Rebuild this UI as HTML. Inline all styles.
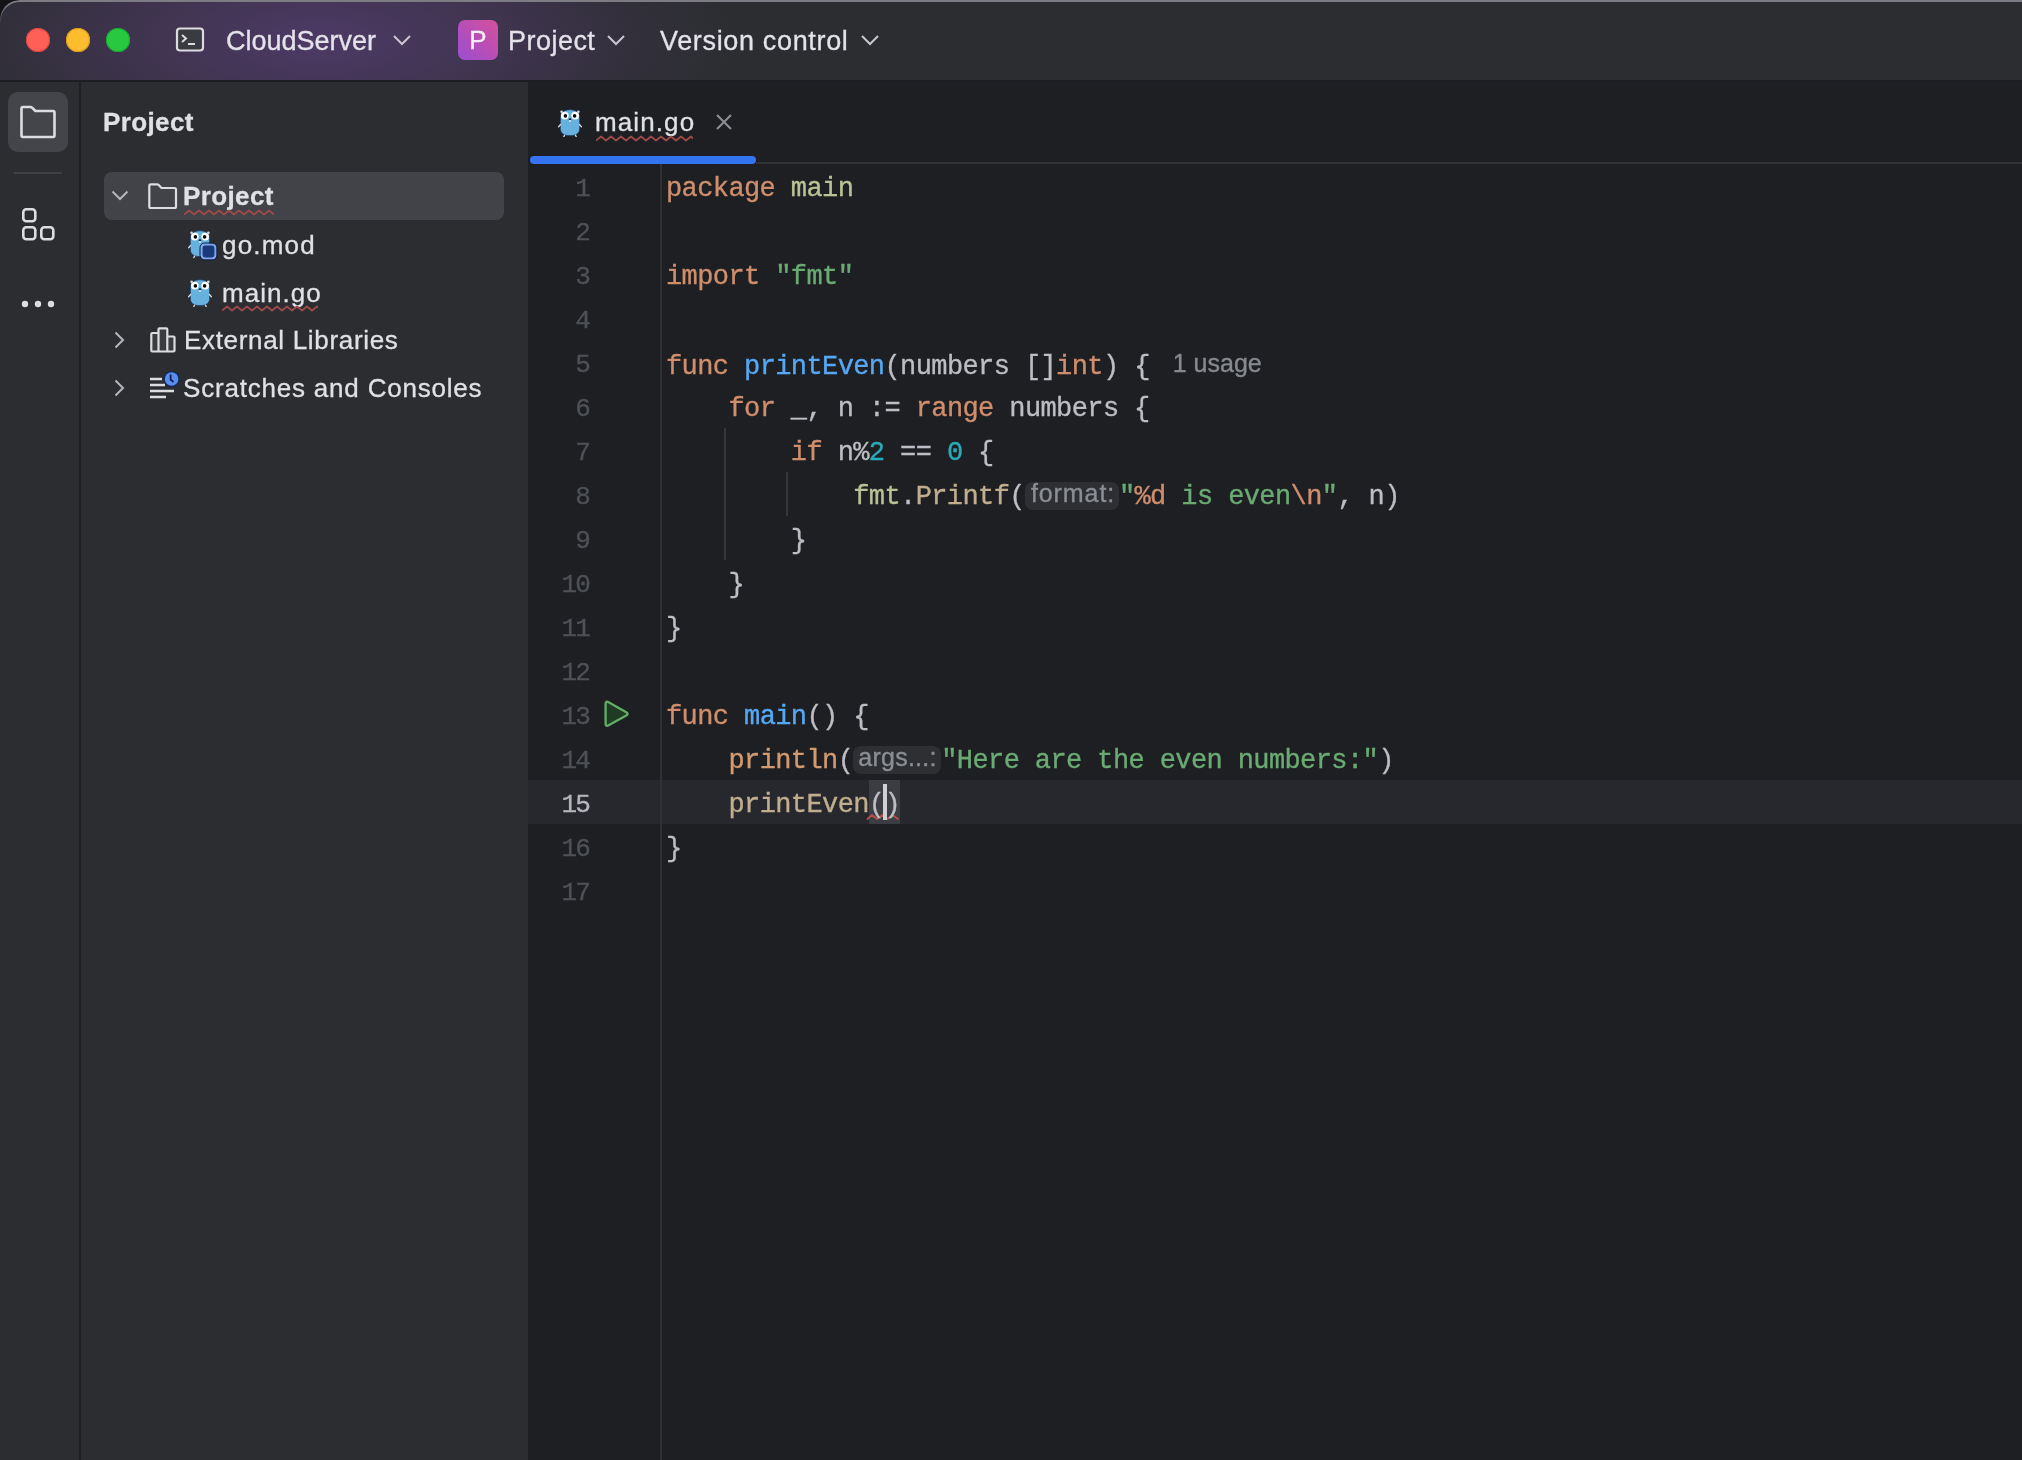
<!DOCTYPE html>
<html><head><meta charset="utf-8">
<style>
*{margin:0;padding:0;box-sizing:border-box}
html,body{width:2022px;height:1460px;overflow:hidden;background:#141416}
body{position:relative;font-family:"Liberation Sans",sans-serif;color:#DFE1E5;-webkit-text-stroke:0.3px currentColor}
.abs{position:absolute}
#title{left:0;top:0;width:2022px;height:80px;background:#2B2D30;overflow:hidden;border-top-left-radius:20px}
#glow{left:0;top:0;width:2022px;height:80px;background:radial-gradient(ellipse 420px 160px at 320px 40px,rgba(125,75,175,0.42),rgba(125,75,175,0.26) 40%,rgba(125,75,175,0.09) 75%,rgba(125,75,175,0) 100%)}
#topline{left:0;top:0;width:2022px;height:24px;border-top:2px solid #7D7C84;border-left:1.5px solid #66676C;border-top-left-radius:20px;-webkit-mask-image:linear-gradient(to bottom,#000 0,#000 12px,transparent 24px)}
#titlesep{left:0;top:80px;width:2022px;height:2px;background:#1C1C23}
#strip{left:0;top:82px;width:79px;height:1378px;background:#2B2D30}
#stripsep{left:79px;top:82px;width:2px;height:1378px;background:#1E1F22}
#panel{left:81px;top:82px;width:447px;height:1378px;background:#2B2D30}
#editor{left:528px;top:82px;width:1494px;height:1378px;background:#1E1F22}
#tabline{left:756px;top:162px;width:1266px;height:2px;background:#313236}
#tabul{left:530px;top:156px;width:226px;height:8px;background:#3574F0;border-radius:4px}
#gutline{left:660px;top:164px;width:2px;height:1296px;background:#2F3135}
.tt{font-size:27px;color:#E4E2EA;white-space:nowrap}
.code{font-family:"Liberation Mono",monospace;font-size:27px;letter-spacing:-0.6px;-webkit-text-stroke:0.35px currentColor;white-space:pre;line-height:44px;height:44px}
.ln{font-family:"Liberation Mono",monospace;font-size:26px;letter-spacing:-1.8px;line-height:44px;height:44px;color:#4E5157;text-align:right;width:60px;left:527px}
.k{color:#CF8E6D}.f{color:#56A8F5}.n{color:#2AACB8}.st{color:#6AAB73}.pk{color:#B9C296}.fc{color:#C0AE8E}.bi{color:#D49A6E}
.hint{display:inline-block;font-family:"Liberation Sans",sans-serif;font-size:25px;color:#8B8E94;background:#2D2F33;border-radius:8px;height:28px;line-height:23px;vertical-align:top;margin-top:7px;box-sizing:border-box;white-space:nowrap;overflow:hidden}
.cl{position:absolute;left:666px;width:1300px;color:#BCBEC4}
</style></head>
<body><div id="wrap" style="position:absolute;left:0;top:0;width:2022px;height:1460px;will-change:transform">
<div id="title" class="abs">
  <div id="glow" class="abs"></div>
  <div class="abs" style="left:26px;top:28px;width:24px;height:24px;border-radius:50%;background:#FF5F57;box-shadow:inset 0 0 0 1px #D6453E"></div>
  <div class="abs" style="left:66px;top:28px;width:24px;height:24px;border-radius:50%;background:#FEBC2E;box-shadow:inset 0 0 0 1px #D69B1F"></div>
  <div class="abs" style="left:106px;top:28px;width:24px;height:24px;border-radius:50%;background:#28C840;box-shadow:inset 0 0 0 1px #1DA631"></div>
  <svg class="abs" style="left:174px;top:26px" width="32" height="28" viewBox="0 0 32 28">
    <rect x="3" y="2.5" width="26" height="22" rx="3" fill="#3A3B40" stroke="#DCDCE0" stroke-width="2.2"/>
    <path d="M8 9 L12 12.5 L8 16" fill="none" stroke="#DCDCE0" stroke-width="2"/>
    <path d="M14 18 H21" stroke="#DCDCE0" stroke-width="2.2"/>
  </svg>
  <div class="abs tt" style="left:226px;top:25px;line-height:32px">CloudServer</div>
  <svg class="abs" style="left:392px;top:34px" width="20" height="12" viewBox="0 0 20 12"><path d="M2 2 L10 10 L18 2" fill="none" stroke="#C9C6D2" stroke-width="2"/></svg>
  <div class="abs" style="left:458px;top:20px;width:40px;height:40px;border-radius:7px;background:linear-gradient(45deg,#9B4DD3,#D5509A)"></div>
  <div class="abs" style="left:458px;top:20px;width:40px;height:40px;line-height:40px;text-align:center;font-size:26px;color:#F4EEF6">P</div>
  <div class="abs tt" style="left:508px;top:25px;line-height:32px;letter-spacing:0.47px">Project</div>
  <svg class="abs" style="left:606px;top:34px" width="20" height="12" viewBox="0 0 20 12"><path d="M2 2 L10 10 L18 2" fill="none" stroke="#C9C6D2" stroke-width="2"/></svg>
  <div class="abs tt" style="left:660px;top:25px;line-height:32px;letter-spacing:0.66px">Version control</div>
  <svg class="abs" style="left:860px;top:34px" width="20" height="12" viewBox="0 0 20 12"><path d="M2 2 L10 10 L18 2" fill="none" stroke="#C9C6D2" stroke-width="2"/></svg>
</div>
<div id="topline" class="abs"></div>
<div id="titlesep" class="abs"></div>
<div id="strip" class="abs"></div>
<div class="abs" style="left:8px;top:92px;width:60px;height:60px;border-radius:10px;background:#43454A"></div>
<svg class="abs" style="left:18px;top:104px" width="40" height="36" viewBox="0 0 40 36">
  <path d="M3.5 4.5 Q3.5 3 5 3 L12.5 3 Q13.5 3 14.3 3.8 L17.5 7 L35 7 Q36.5 7 36.5 8.5 L36.5 31.5 Q36.5 33 35 33 L5 33 Q3.5 33 3.5 31.5 Z" fill="none" stroke="#DCDDE1" stroke-width="2.6" stroke-linejoin="round"/>
</svg>
<div class="abs" style="left:14px;top:172px;width:48px;height:2px;background:#3F4145"></div>
<svg class="abs" style="left:18px;top:204px" width="40" height="40" viewBox="0 0 40 40">
  <rect x="5.3" y="5.3" width="12" height="12" rx="3" fill="none" stroke="#DCDDE1" stroke-width="2.6"/>
  <rect x="5.3" y="23.3" width="12" height="12" rx="3" fill="none" stroke="#DCDDE1" stroke-width="2.6"/>
  <rect x="23.3" y="23.3" width="12" height="12" rx="3" fill="none" stroke="#DCDDE1" stroke-width="2.6"/>
</svg>
<svg class="abs" style="left:18px;top:294px" width="40" height="20" viewBox="0 0 40 20">
  <circle cx="7" cy="10" r="3.2" fill="#DCDDE1"/><circle cx="20" cy="10" r="3.2" fill="#DCDDE1"/><circle cx="33" cy="10" r="3.2" fill="#DCDDE1"/>
</svg>
<div id="stripsep" class="abs"></div>
<div id="panel" class="abs"></div>
<div class="abs" style="left:103px;top:104px;font-size:26px;font-weight:bold;line-height:36px;color:#DFE1E5;letter-spacing:0.38px">Project</div>
<div class="abs" style="left:104px;top:172px;width:400px;height:48px;border-radius:8px;background:#414348"></div>
<svg class="abs" style="left:110px;top:188px" width="20" height="14" viewBox="0 0 20 14"><path d="M2.5 3.5 L10 11 L17.5 3.5" fill="none" stroke="#B4B6BB" stroke-width="2"/></svg>
<svg class="abs" style="left:146px;top:181px" width="32" height="30" viewBox="0 0 32 30">
  <path d="M3.3 4.8 Q3.3 3.3 4.8 3.3 L11 3.3 Q12 3.3 12.7 4 L15.5 7 L28.5 7 Q30 7 30 8.5 L30 25.5 Q30 27 28.5 27 L4.8 27 Q3.3 27 3.3 25.5 Z" fill="none" stroke="#DCDDE1" stroke-width="2.2" stroke-linejoin="round"/>
</svg>
<div class="abs" style="left:183px;top:178px;font-size:26px;font-weight:bold;line-height:36px;color:#DFE1E5;letter-spacing:0.38px">Project</div>
<svg class="abs" style="left:184px;top:209px" width="90" height="7" viewBox="0 0 90 7"><path d="M0 5.5 L5.0 1.5 L10.0 5.5 L15.0 1.5 L20.0 5.5 L25.0 1.5 L30.0 5.5 L35.0 1.5 L40.0 5.5 L45.0 1.5 L50.0 5.5 L55.0 1.5 L60.0 5.5 L65.0 1.5 L70.0 5.5 L75.0 1.5 L80.0 5.5 L85.0 1.5 L90.0 5.5 L95.0 1.5" fill="none" stroke="#A04A4A" stroke-width="1.7" stroke-linejoin="round"/></svg>
<svg class="abs" style="left:188px;top:230px" width="32" height="32" viewBox="-1 0 32 32"><circle cx="2.6" cy="2.8" r="1.3" fill="#D5DEE6"/><circle cx="19.4" cy="2.8" r="1.3" fill="#D5DEE6"/>
<path d="M11 0.8 C18 0.8 20.6 4.5 20.6 11 L20.6 19.5 C20.6 24.6 16.6 26.6 11 26.6 C5.4 26.6 1.4 24.6 1.4 19.5 L1.4 11 C1.4 4.5 4 0.8 11 0.8 Z" fill="#67B1DF" stroke="#1C3D66" stroke-width="0.7"/>
<path d="M1.6 15.5 L-0.4 17.8 M20.4 15.5 L22.4 17.8 M5.5 26.2 L4.8 27.6 M16.5 26.2 L17.2 27.6" stroke="#D5DEE6" stroke-width="1.3" stroke-linecap="round"/>
<circle cx="5.8" cy="6.6" r="3.9" fill="#FFFFFF"/><circle cx="16.2" cy="6.6" r="3.9" fill="#FFFFFF"/>
<circle cx="6.4" cy="6.9" r="1.8" fill="#0A0A0A"/><circle cx="15.6" cy="6.9" r="1.8" fill="#0A0A0A"/>
<ellipse cx="11" cy="10.3" rx="1.3" ry="1" fill="#14202C"/><path d="M10.1 11.2 h1.8 v1.6 h-1.8 z" fill="#F0F0F0"/>
  <rect x="12.5" y="14.5" width="14" height="14" rx="3.5" fill="#1A3A7A" stroke="#7FA6F0" stroke-width="2.2"/>
  <rect x="11" y="13" width="17" height="17" rx="4.5" fill="none" stroke="#0F2140" stroke-width="1"/>
</svg>
<div class="abs" style="left:222px;top:227px;font-size:26px;line-height:36px;color:#DFE1E5;letter-spacing:1.2px">go.mod</div>
<svg class="abs" style="left:188px;top:279px" width="24" height="28" viewBox="-1 0 24 28"><circle cx="2.6" cy="2.8" r="1.3" fill="#D5DEE6"/><circle cx="19.4" cy="2.8" r="1.3" fill="#D5DEE6"/>
<path d="M11 0.8 C18 0.8 20.6 4.5 20.6 11 L20.6 19.5 C20.6 24.6 16.6 26.6 11 26.6 C5.4 26.6 1.4 24.6 1.4 19.5 L1.4 11 C1.4 4.5 4 0.8 11 0.8 Z" fill="#67B1DF" stroke="#1C3D66" stroke-width="0.7"/>
<path d="M1.6 15.5 L-0.4 17.8 M20.4 15.5 L22.4 17.8 M5.5 26.2 L4.8 27.6 M16.5 26.2 L17.2 27.6" stroke="#D5DEE6" stroke-width="1.3" stroke-linecap="round"/>
<circle cx="5.8" cy="6.6" r="3.9" fill="#FFFFFF"/><circle cx="16.2" cy="6.6" r="3.9" fill="#FFFFFF"/>
<circle cx="6.4" cy="6.9" r="1.8" fill="#0A0A0A"/><circle cx="15.6" cy="6.9" r="1.8" fill="#0A0A0A"/>
<ellipse cx="11" cy="10.3" rx="1.3" ry="1" fill="#14202C"/><path d="M10.1 11.2 h1.8 v1.6 h-1.8 z" fill="#F0F0F0"/></svg>
<div class="abs" style="left:222px;top:275px;font-size:26px;line-height:36px;color:#DFE1E5;letter-spacing:1.05px">main.go</div>
<svg class="abs" style="left:222px;top:305px" width="96" height="7" viewBox="0 0 96 7"><path d="M0 5.5 L5.0 1.5 L10.0 5.5 L15.0 1.5 L20.0 5.5 L25.0 1.5 L30.0 5.5 L35.0 1.5 L40.0 5.5 L45.0 1.5 L50.0 5.5 L55.0 1.5 L60.0 5.5 L65.0 1.5 L70.0 5.5 L75.0 1.5 L80.0 5.5 L85.0 1.5 L90.0 5.5 L95.0 1.5 L100.0 5.5" fill="none" stroke="#A04A4A" stroke-width="1.7" stroke-linejoin="round"/></svg>
<svg class="abs" style="left:112px;top:330px" width="14" height="20" viewBox="0 0 14 20"><path d="M3.5 2.5 L11 10 L3.5 17.5" fill="none" stroke="#B4B6BB" stroke-width="2"/></svg>
<svg class="abs" style="left:148px;top:326px" width="30" height="28" viewBox="0 0 30 28">
  <path d="M3.3 8 Q3.3 7 4.3 7 L10.5 7 L10.5 3.3 Q10.5 2.3 11.5 2.3 L18.3 2.3 Q19.3 2.3 19.3 3.3 L19.3 10.5 L25.5 10.5 Q26.5 10.5 26.5 11.5 L26.5 24.5 Q26.5 25.5 25.5 25.5 L4.3 25.5 Q3.3 25.5 3.3 24.5 Z M10.5 7 L10.5 25.5 M19.3 10.5 L19.3 25.5" fill="#3A3C40" stroke="#DCDDE1" stroke-width="2.2" stroke-linejoin="round"/>
</svg>
<div class="abs" style="left:184px;top:322px;font-size:26px;line-height:36px;color:#DFE1E5;letter-spacing:0.68px">External Libraries</div>
<svg class="abs" style="left:112px;top:378px" width="14" height="20" viewBox="0 0 14 20"><path d="M3.5 2.5 L11 10 L3.5 17.5" fill="none" stroke="#B4B6BB" stroke-width="2"/></svg>
<svg class="abs" style="left:148px;top:368px" width="32" height="32" viewBox="0 0 32 32">
  <path d="M2 11 H14 M2 17 H17 M2 23 H26 M2 29 H18" stroke="#DCDDE1" stroke-width="2.4"/>
  <circle cx="23.6" cy="11" r="8" fill="#0F2A5C"/>
  <circle cx="23.6" cy="11" r="6.8" fill="#5A8DEE"/>
  <path d="M22.6 6.5 L22.6 11.5 L25.5 14" fill="none" stroke="#0E2350" stroke-width="1.8"/>
</svg>
<div class="abs" style="left:183px;top:370px;font-size:26px;line-height:36px;color:#DFE1E5;letter-spacing:0.8px">Scratches and Consoles</div>
<div id="editor" class="abs"></div>
<svg class="abs" style="left:558px;top:109px" width="24" height="28" viewBox="-1 0 24 28"><circle cx="2.6" cy="2.8" r="1.3" fill="#D5DEE6"/><circle cx="19.4" cy="2.8" r="1.3" fill="#D5DEE6"/>
<path d="M11 0.8 C18 0.8 20.6 4.5 20.6 11 L20.6 19.5 C20.6 24.6 16.6 26.6 11 26.6 C5.4 26.6 1.4 24.6 1.4 19.5 L1.4 11 C1.4 4.5 4 0.8 11 0.8 Z" fill="#67B1DF" stroke="#1C3D66" stroke-width="0.7"/>
<path d="M1.6 15.5 L-0.4 17.8 M20.4 15.5 L22.4 17.8 M5.5 26.2 L4.8 27.6 M16.5 26.2 L17.2 27.6" stroke="#D5DEE6" stroke-width="1.3" stroke-linecap="round"/>
<circle cx="5.8" cy="6.6" r="3.9" fill="#FFFFFF"/><circle cx="16.2" cy="6.6" r="3.9" fill="#FFFFFF"/>
<circle cx="6.4" cy="6.9" r="1.8" fill="#0A0A0A"/><circle cx="15.6" cy="6.9" r="1.8" fill="#0A0A0A"/>
<ellipse cx="11" cy="10.3" rx="1.3" ry="1" fill="#14202C"/><path d="M10.1 11.2 h1.8 v1.6 h-1.8 z" fill="#F0F0F0"/></svg>
<div class="abs" style="left:595px;top:104px;font-size:26px;line-height:36px;color:#DFE1E5;letter-spacing:1.1px">main.go</div>
<svg class="abs" style="left:596px;top:135px" width="97" height="7" viewBox="0 0 97 7"><path d="M0 5.5 L5.0 1.5 L10.0 5.5 L15.0 1.5 L20.0 5.5 L25.0 1.5 L30.0 5.5 L35.0 1.5 L40.0 5.5 L45.0 1.5 L50.0 5.5 L55.0 1.5 L60.0 5.5 L65.0 1.5 L70.0 5.5 L75.0 1.5 L80.0 5.5 L85.0 1.5 L90.0 5.5 L95.0 1.5 L100.0 5.5" fill="none" stroke="#A04A4A" stroke-width="1.7" stroke-linejoin="round"/></svg>
<svg class="abs" style="left:714px;top:112px" width="20" height="20" viewBox="0 0 20 20"><path d="M3 3 L17 17 M17 3 L3 17" stroke="#8C8F94" stroke-width="2"/></svg>
<div id="tabline" class="abs"></div>
<div id="tabul" class="abs"></div>
<div class="abs" style="left:528px;top:780px;width:1494px;height:44px;background:#26282E"></div>
<div class="abs" style="left:869px;top:780px;width:31px;height:44px;background:#3B3D42"></div>
<div id="gutline" class="abs"></div>
<div class="abs" style="left:724px;top:428px;width:2px;height:132px;background:#34363B"></div>
<div class="abs" style="left:786px;top:472px;width:2px;height:44px;background:#34363B"></div>
<svg class="abs" style="left:866px;top:812px" width="36" height="10" viewBox="0 0 36 10"><path d="M1.5 7 L6 3 L11 7 L16.5 3 L21.5 7 L26.5 3 L32 7" fill="none" stroke="#B5504E" stroke-width="1.8" stroke-linejoin="round" stroke-linecap="round"/></svg>
<div class="abs" style="left:883px;top:784px;width:4px;height:36px;background:#CED0D6"></div>

<svg class="abs" style="left:600px;top:697px" width="32" height="34" viewBox="0 0 32 34">
  <path d="M5.6 7 Q5.6 3.6 8.6 5.3 L26.3 15.2 Q29 16.8 26.3 18.4 L8.6 28.3 Q5.6 30 5.6 26.6 Z" fill="#1F3B24" stroke="#62AE67" stroke-width="2.3" stroke-linejoin="round"/>
</svg>

<div class="code cl" style="top:167px"><span class="k">package</span> <span class="pk">main</span></div>
<div class="abs ln" style="top:167px;color:#4E5157;width:62px">1</div>
<div class="code cl" style="top:211px"></div>
<div class="abs ln" style="top:211px;color:#4E5157;width:62px">2</div>
<div class="code cl" style="top:255px"><span class="k">import</span> <span class="st">"fmt"</span></div>
<div class="abs ln" style="top:255px;color:#4E5157;width:62px">3</div>
<div class="code cl" style="top:299px"></div>
<div class="abs ln" style="top:299px;color:#4E5157;width:62px">4</div>
<div class="code cl" style="top:343px"><span class="k">func</span> <span class="f">printEven</span>(numbers []<span class="k">int</span>) {<span style="font-family:'Liberation Sans',sans-serif;font-size:25px;color:#86898F;margin-left:23px;letter-spacing:0px;position:relative;top:-2px">1 usage</span></div>
<div class="abs ln" style="top:343px;color:#4E5157;width:62px">5</div>
<div class="code cl" style="top:387px">    <span class="k">for</span> _, n := <span class="k">range</span> numbers {</div>
<div class="abs ln" style="top:387px;color:#4E5157;width:62px">6</div>
<div class="code cl" style="top:431px">        <span class="k">if</span> n%<span class="n">2</span> == <span class="n">0</span> {</div>
<div class="abs ln" style="top:431px;color:#4E5157;width:62px">7</div>
<div class="code cl" style="top:475px">            <span class="pk">fmt</span>.<span class="fc">Printf</span>(<span class="hint" style="width:94px;padding-left:6px;letter-spacing:0.93px">format:</span><span class="st">"</span><span class="k">%d</span><span class="st"> is even</span><span class="k">\n</span><span class="st">"</span>, n)</div>
<div class="abs ln" style="top:475px;color:#4E5157;width:62px">8</div>
<div class="code cl" style="top:519px">        }</div>
<div class="abs ln" style="top:519px;color:#4E5157;width:62px">9</div>
<div class="code cl" style="top:563px">    }</div>
<div class="abs ln" style="top:563px;color:#4E5157;width:62px">10</div>
<div class="code cl" style="top:607px">}</div>
<div class="abs ln" style="top:607px;color:#4E5157;width:62px">11</div>
<div class="code cl" style="top:651px"></div>
<div class="abs ln" style="top:651px;color:#4E5157;width:62px">12</div>
<div class="code cl" style="top:695px"><span class="k">func</span> <span class="f">main</span>() {</div>
<div class="abs ln" style="top:695px;color:#4E5157;width:62px">13</div>
<div class="code cl" style="top:739px">    <span class="bi">println</span>(<span class="hint" style="width:88px;padding-left:5px;letter-spacing:0.25px">args...:</span><span class="st">"Here are the even numbers:"</span>)</div>
<div class="abs ln" style="top:739px;color:#4E5157;width:62px">14</div>
<div class="code cl" style="top:783px">    <span class="fc">printEven</span>()</div>
<div class="abs ln" style="top:783px;color:#B4B6BC;width:62px">15</div>
<div class="code cl" style="top:827px">}</div>
<div class="abs ln" style="top:827px;color:#4E5157;width:62px">16</div>
<div class="code cl" style="top:871px"></div>
<div class="abs ln" style="top:871px;color:#4E5157;width:62px">17</div>
</div></body></html>
